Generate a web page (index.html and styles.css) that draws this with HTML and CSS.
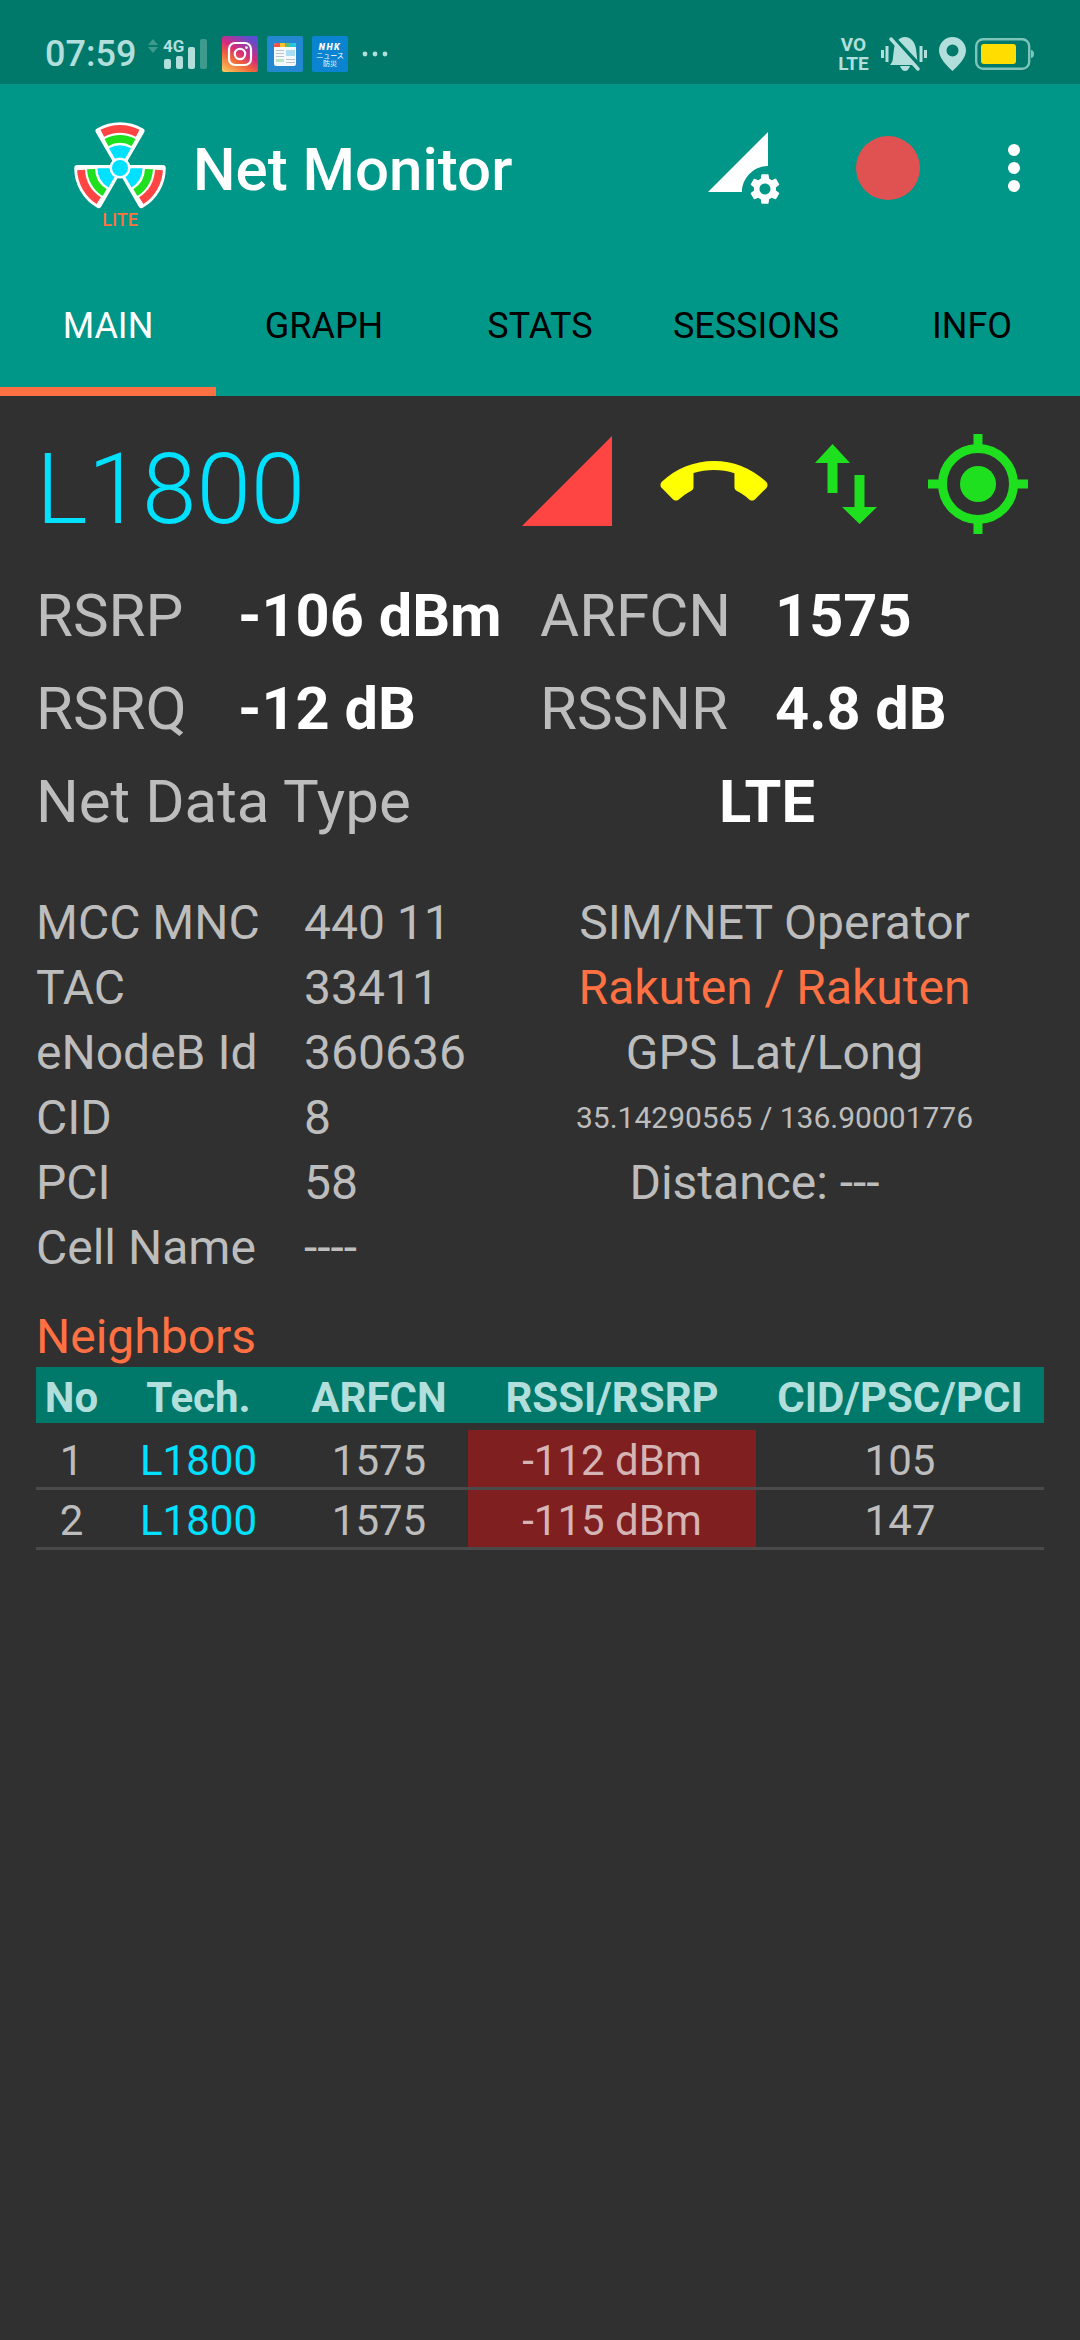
FILE: index.html
```html
<!DOCTYPE html>
<html lang="en">
<head>
  <meta charset="UTF-8" />
  <title>Net Monitor</title>
  <link rel="stylesheet" href="styles.css">
</head>
<body>
  <!-- ================== Status bar ================== -->
  <div class="statusbar">
    <span class="clock">07:59</span>
    <svg class="st-signal" width="60" height="40" viewBox="0 -6 60 40">
      <path class="dim" d="M0 6 5 0l5 6zM0 8h10l-5 6z"/>
      <rect class="on" x="16" y="20" width="7" height="10" rx="2"/>
      <rect class="on" x="28" y="17" width="7" height="13" rx="2"/>
      <rect class="on" x="40" y="8" width="7" height="22" rx="2"/>
      <rect class="dim" x="52" y="0" width="7" height="30" rx="2"/>
      <text class="st-4g" x="15" y="13">4G</text>
    </svg>
    <svg class="st-app" width="36" height="36" viewBox="0 0 36 36">
      <defs>
        <linearGradient id="insta" x1="0.1" y1="1" x2="0.7" y2="0">
          <stop offset="0" stop-color="#fcc45c"/>
          <stop offset="0.35" stop-color="#f0663a"/>
          <stop offset="0.6" stop-color="#d62a7e"/>
          <stop offset="1" stop-color="#5a4fcf"/>
        </linearGradient>
      </defs>
      <rect width="36" height="36" rx="2" fill="url(#insta)"/>
      <rect x="7" y="7" width="22" height="22" rx="6" fill="none" stroke="#fff" stroke-width="2.2"/>
      <circle cx="18" cy="18" r="5.2" fill="none" stroke="#fff" stroke-width="2.2"/>
      <circle cx="24.4" cy="11.6" r="1.4" fill="#fff"/>
    </svg>
    <svg class="st-app" width="36" height="36" viewBox="0 0 36 36">
      <rect width="36" height="36" rx="2" fill="#2388d0"/>
      <rect x="7" y="7" width="22" height="23" rx="2" fill="#f5f7f8"/>
      <path fill="#ef5350" d="M7 11V9a2 2 0 0 1 2-2h4v4z"/>
      <rect x="13" y="7" width="5" height="4" fill="#fbc02d"/>
      <rect x="18" y="7" width="5" height="4" fill="#66bb6a"/>
      <path fill="#26c6da" d="M23 7h4a2 2 0 0 1 2 2v2h-6z"/>
      <rect x="19" y="14" width="9" height="6" fill="#a9dcf0"/>
      <path fill="#b8c4cc" d="M9 14h8v1H9zM9 17h8v1H9zM9 20h8v1H9zM19 23h9v1h-9zM19 26h9v1h-9z"/>
      <rect x="9" y="23" width="8" height="3" fill="#b7e4c7"/>
    </svg>
    <div class="st-nhk">
      <b>NHK</b>
      <span>ニュース</span>
      <span>防災</span>
    </div>
    <svg class="st-more" width="26" height="6" viewBox="0 0 26 6">
      <circle cx="3" cy="3" r="2.4"/><circle cx="13" cy="3" r="2.4"/><circle cx="23" cy="3" r="2.4"/>
    </svg>
    <div class="spacer"></div>
    <div class="st-volte"><span>VO</span><span>LTE</span></div>
    <svg class="st-bell" width="46" height="36" viewBox="0 0 46 36">
      <path d="M0 14h3v8H0zM43 14h3v8h-3zM4.500 10h3v16h-3zM38.500 10h3v16h-3z"/>
      <path d="M24 1c6 0 10 5 11 12l1 8c0 3 1 6 3 8H9c2-2 3-5 3-8l1-8C14 6 18 1 24 1zM19 30h10c-1 3-3 5-5 5s-4-2-5-5z"/>
      <path class="bell-gap" d="M12 1 41 32"/>
      <path class="bell-slash" d="M10 3 37 33"/>
    </svg>
    <svg class="st-pin" width="27" height="34" viewBox="0 0 27 34">
      <path fill-rule="evenodd" d="M13.500 0C6 0 0 6 0 13.500 0 21 8 29 13.500 34 19 29 27 21 27 13.500 27 6 21 0 13.500 0zm0 7.500a6 6 0 1 1 0 12 6 6 0 0 1 0-12z"/>
    </svg>
    <svg class="st-battery" width="60" height="32" viewBox="0 0 60 32">
      <rect class="batt-shell" x="1.200" y="1.200" width="53" height="29.600" rx="7"/>
      <rect class="batt-fill" x="6" y="6" width="35" height="20" rx="3"/>
      <path class="batt-tip" d="M56 12c2 0 3 2 3 4s-1 4-3 4z"/>
    </svg>
  </div>

  <!-- ================== App bar and tabs ================== -->
  <header class="appbar">
    <div class="toolbar">
      <svg class="logo" width="100" height="120" viewBox="-50 -50 100 120">
        <defs>
          <g id="blade">
            <path class="blade-edge" d="M0 0-21.500-37A43 43 0 0 1 21.500-37Z"/>
            <path class="band-red" d="M-19.500-38.300A43 43 0 0 1 19.500-38.300L15.900-31.200A35 35 0 0 0-15.900-31.200Z"/>
            <path class="band-green" d="M-15.500-29.100A33 33 0 0 1 15.500-29.100L11.700-22.100A25 25 0 0 0-11.700-22.100Z"/>
            <path class="band-cyan" d="M-11-19.700A22.500 22.500 0 0 1 11-19.700L2-4H-2Z"/>
          </g>
        </defs>
        <use href="#blade"/>
        <use href="#blade" transform="rotate(120)"/>
        <use href="#blade" transform="rotate(240)"/>
        <circle class="hub-ring" r="10.500"/>
        <circle class="band-cyan" r="8"/>
        <text class="logo-lite" x="0" y="58" text-anchor="middle">LITE</text>
      </svg>
      <h1 class="title">Net Monitor</h1>
      <div class="spacer"></div>
      <svg class="act-signal" width="72" height="72" viewBox="0 0 72 72">
        <path fill="#fff" d="M0 60 60 0v34c-14 0-26 12-26 26z"/>
        <path fill="#fff" transform="translate(38.600 38.600) scale(1.530)" d="M19.140 12.940c.04-.3.060-.61.060-.94 0-.32-.02-.64-.07-.94l2.030-1.580c.18-.14.230-.41.120-.61l-1.920-3.320c-.12-.22-.37-.29-.59-.22l-2.390.96c-.5-.38-1.030-.7-1.620-.94l-.36-2.540c-.04-.24-.24-.41-.48-.41h-3.840c-.24 0-.43.17-.47.41l-.36 2.540c-.59.24-1.130.57-1.620.94l-2.390-.96c-.22-.08-.47 0-.59.22L2.740 8.870c-.12.21-.08.47.12.61l2.030 1.580c-.05.3-.09.63-.09.94s.02.64.07.94l-2.030 1.580c-.18.14-.23.41-.12.61l1.920 3.320c.12.22.37.29.59.22l2.390-.96c.5.38 1.030.7 1.620.94l.36 2.540c.05.24.24.41.48.41h3.840c.24 0 .44-.17.47-.41l.36-2.540c.59-.24 1.130-.56 1.620-.94l2.390.96c.22.08.47 0 .59-.22l1.920-3.320c.12-.22.070-.47-.12-.61l-2.010-1.580zM12 15.600c-1.980 0-3.600-1.620-3.600-3.600s1.620-3.600 3.600-3.600 3.600 1.620 3.600 3.600-1.620 3.600-3.600 3.600z"/>
      </svg>
      <div class="record"></div>
      <div class="overflow"><i></i><i></i><i></i></div>
    </div>
    <nav class="tabs">
      <a class="tab active">MAIN</a>
      <a class="tab">GRAPH</a>
      <a class="tab">STATS</a>
      <a class="tab">SESSIONS</a>
      <a class="tab">INFO</a>
    </nav>
  </header>

  <main class="content">
    <!-- ================== Tech and state icons ================== -->
    <section class="tech-row">
      <span class="tech">L1800</span>
      <div class="spacer"></div>
      <svg class="ic-level" width="90" height="90" viewBox="0 0 90 90"><path d="M0 90 90 0v90z"/></svg>
      <svg class="ic-call" width="108" height="41" viewBox="0 7 24 9.200"><path d="M12 9c-1.600 0-3.150.25-4.600.72v3.100c0 .39-.23.74-.56.9-.98.49-1.870 1.120-2.660 1.850-.18.18-.43.28-.7.28-.28 0-.53-.11-.71-.29L.29 13.080c-.18-.17-.29-.42-.29-.7 0-.28.11-.53.29-.71C3.340 8.780 7.460 7 12 7s8.660 1.780 11.710 4.670c.18.18.29.43.29.71 0 .28-.11.53-.29.71l-2.480 2.480c-.18.18-.43.29-.71.29-.27 0-.52-.11-.7-.28-.79-.74-1.690-1.360-2.670-1.850-.33-.16-.56-.5-.56-.9v-3.100C15.150 9.250 13.600 9 12 9z"/></svg>
      <svg class="ic-data" width="62" height="80" viewBox="0 0 62 80"><path d="M17.500 0 35 19H22.500v30h-10V19H0zM39.500 31h10v32H62L44.500 80 27 63h12.500z"/></svg>
      <svg class="ic-gps" width="100" height="100" viewBox="0 0 100 100">
        <circle class="gps-ring" cx="50" cy="50" r="35.500"/>
        <circle class="gps-dot" cx="50" cy="50" r="18"/>
        <path class="gps-dot" d="M45.500 0h9v12h-9zM45.500 88h9v12h-9zM0 45.500h12v9H0zM88 45.500h12v9H88z"/>
      </svg>
    </section>

    <!-- ================== Main readings ================== -->
    <section class="readings">
      <span class="lbl">RSRP</span><b class="val">-106 dBm</b>
      <span class="lbl">ARFCN</span><b class="val">1575</b>
      <span class="lbl">RSRQ</span><b class="val">-12 dB</b>
      <span class="lbl">RSSNR</span><b class="val">4.8 dB</b>
      <span class="lbl wide">Net Data Type</span><b class="val net-type">LTE</b>
    </section>

    <!-- ================== Cell details ================== -->
    <section class="details">
      <div class="cell-info">
        <span>MCC MNC</span><span>440 11</span>
        <span>TAC</span><span>33411</span>
        <span>eNodeB Id</span><span>360636</span>
        <span>CID</span><span>8</span>
        <span>PCI</span><span>58</span>
        <span>Cell Name</span><span>----</span>
      </div>
      <div class="operator">
        <span>SIM/NET Operator</span>
        <span class="accent">Rakuten / Rakuten</span>
        <span>GPS Lat/Long</span>
        <span class="coords">35.14290565 / 136.90001776</span>
        <span class="distance">Distance: ---</span>
      </div>
    </section>

    <!-- ================== Neighbors ================== -->
    <h2 class="neighbors-title">Neighbors</h2>
    <section class="neighbors">
      <div class="nb-row nb-head">
        <span>No</span><span>Tech.</span><span>ARFCN</span><span>RSSI/RSRP</span><span>CID/PSC/PCI</span>
      </div>
      <div class="nb-row">
        <span>1</span><span class="nb-tech">L1800</span><span>1575</span><span class="nb-weak">-112 dBm</span><span>105</span>
      </div>
      <div class="nb-row">
        <span>2</span><span class="nb-tech">L1800</span><span>1575</span><span class="nb-weak">-115 dBm</span><span>147</span>
      </div>
    </section>
  </main>
</body>
</html>
```

FILE: styles.css
```css
* {
  box-sizing: border-box;
}
html,
body {
  margin: 0;
  height: 2340px;
  background-color: #303030;
  font-family: Roboto, sans-serif;
  overflow: hidden;
}
svg {
  display: block;
  flex: none;
}
.spacer {
  flex: 1;
}

/* status bar */
.statusbar {
  height: 84px;
  background-color: #00796b;
  color: #b2dfdb;
  display: flex;
  align-items: center;
  padding: 24px 45px 0 45px;
}
.clock {
  font-size: 36px;
  font-weight: 500;
  width: 103px;
}
.st-signal {
  margin-top: -2px;
  margin-right: 14px;
}
.st-signal .on,
.st-4g {
  fill: #b2dfdb;
}
.st-signal .dim {
  fill: #3f9a8e;
}
.st-4g {
  font-family: Roboto, sans-serif;
  font-size: 17px;
  font-weight: 700;
}
.st-app {
  margin-right: 9px;
}
.st-nhk {
  width: 36px;
  height: 36px;
  border-radius: 2px;
  background-color: #0a84d0;
  color: #fff;
  display: flex;
  flex-direction: column;
  align-items: center;
  font-family: "Noto Sans CJK JP", sans-serif;
  font-size: 7px;
  line-height: 8px;
  padding-top: 7px;
}
.st-nhk b {
  font-family: Roboto, sans-serif;
  font-size: 9px;
  font-style: italic;
  font-weight: 900;
  letter-spacing: 1.500px;
}
.st-more {
  margin-left: 14px;
  fill: #b2dfdb;
}
.st-volte {
  display: flex;
  flex-direction: column;
  align-items: center;
  font-size: 19px;
  font-weight: 700;
  line-height: 19px;
  width: 33px;
  margin-right: 11px;
}
.st-bell {
  fill: #b2dfdb;
  margin-right: 12px;
}
.bell-gap {
  fill: none;
  stroke: #00796b;
  stroke-width: 4px;
}
.bell-slash {
  fill: none;
  stroke: #b2dfdb;
  stroke-width: 3.500px;
  stroke-linecap: round;
}
.st-pin {
  fill: #b2dfdb;
  margin-right: 9px;
}
.batt-shell {
  fill: none;
  stroke: #7fc4bb;
  stroke-width: 2.400px;
}
.batt-fill {
  fill: #ffdd00;
}
.batt-tip {
  fill: #7fc4bb;
}

/* app bar */
.appbar {
  background-color: #009688;
}
.toolbar {
  height: 168px;
  display: flex;
  align-items: center;
  padding: 0 60px 0 70px;
}
.logo {
  margin-top: 20px;
  margin-right: 23px;
}
.blade-edge {
  fill: #fff;
  stroke: #fff;
  stroke-width: 6px;
  stroke-linejoin: round;
}
.band-red {
  fill: #ff4444;
}
.band-green {
  fill: #1fe01f;
}
.band-cyan {
  fill: #00e0ff;
}
.hub-ring {
  fill: #fff;
}
.logo-lite {
  font-family: Roboto, sans-serif;
  font-size: 18px;
  font-weight: 500;
  fill: #ff7043;
}
.title {
  margin: 0;
  padding-top: 3px;
  color: #fff;
  font-size: 60px;
  font-weight: 500;
}
.act-signal {
  margin-right: 76px;
}
.record {
  width: 64px;
  height: 64px;
  border-radius: 50%;
  background-color: #e05252;
  margin-right: 88px;
}
.overflow {
  display: flex;
  flex-direction: column;
  gap: 6px;
}
.overflow i {
  width: 12px;
  height: 12px;
  border-radius: 50%;
  background-color: #fff;
}
.tabs {
  display: flex;
  height: 144px;
}
.tab {
  flex: 1;
  display: flex;
  align-items: center;
  justify-content: center;
  font-size: 36px;
  color: #000;
  padding-top: 13px;
  border-bottom: 9px solid transparent;
}
.tab.active {
  color: #fff;
  border-bottom-color: #ff7043;
}

/* main panel */
.content {
  padding: 0 36px;
}
.tech-row {
  display: flex;
  align-items: center;
  height: 130px;
  margin-top: 23px;
  padding-right: 16px;
}
.tech {
  font-size: 98px;
  font-weight: 350;
  color: #00e0ff;
  padding-top: 10px;
}
.ic-level {
  margin-top: -6px;
}
.ic-level path {
  fill: #ff4444;
}
.ic-call {
  margin-left: 48px;
  margin-top: -6px;
}
.ic-call path {
  fill: #ffff00;
}
.ic-data {
  margin-left: 47px;
}
.ic-data path,
.gps-dot {
  fill: #1fe01f;
}
.ic-gps {
  margin-left: 51px;
}
.gps-ring {
  fill: none;
  stroke: #1fe01f;
  stroke-width: 9px;
}
.readings {
  display: grid;
  grid-template-columns: 202px 302px 235px 1fr;
  grid-auto-rows: 93px;
  align-items: center;
  margin-top: 20px;
  font-size: 60px;
}
.lbl {
  color: #bdbdbd;
}
.val {
  color: #fff;
  font-size: 59.500px;
  font-weight: 700;
}
.lbl.wide {
  grid-column: span 2;
}
.net-type {
  grid-column: span 2;
  padding-left: 179px;
}
.details {
  display: grid;
  grid-template-columns: 469px 1fr;
  margin-top: 42px;
  font-size: 48px;
  color: #bdbdbd;
}
.cell-info {
  display: grid;
  grid-template-columns: 268px 1fr;
  grid-auto-rows: 65px;
  align-items: center;
}
.operator {
  display: grid;
  grid-auto-rows: 65px;
  align-items: center;
  justify-items: center;
}
.accent {
  color: #ff7043;
}
.coords {
  font-size: 30px;
}
.distance {
  padding-right: 40px;
}
.neighbors-title {
  margin: 27px 0 0;
  font-size: 48px;
  font-weight: 400;
  line-height: 60px;
  color: #ff7043;
}
.nb-row {
  display: grid;
  grid-template-columns: 71px 183px 178px 288px 288px;
  height: 60px;
  align-items: stretch;
  text-align: center;
  font-size: 42px;
  line-height: 50px;
  color: #bdbdbd;
  border-bottom: 3px solid #4a4a4a;
}
.nb-row span {
  padding-top: 6px;
}
.nb-head {
  height: 56px;
  margin-bottom: 7px;
  background-color: #00796b;
  color: #b2dfdb;
  font-size: 42px;
  font-weight: 700;
  line-height: 49px;
  border-bottom: none;
}
.nb-tech {
  color: #00e0ff;
}
.nb-weak {
  background-color: #7f1f1f;
  color: #d4b4b4;
}
```
